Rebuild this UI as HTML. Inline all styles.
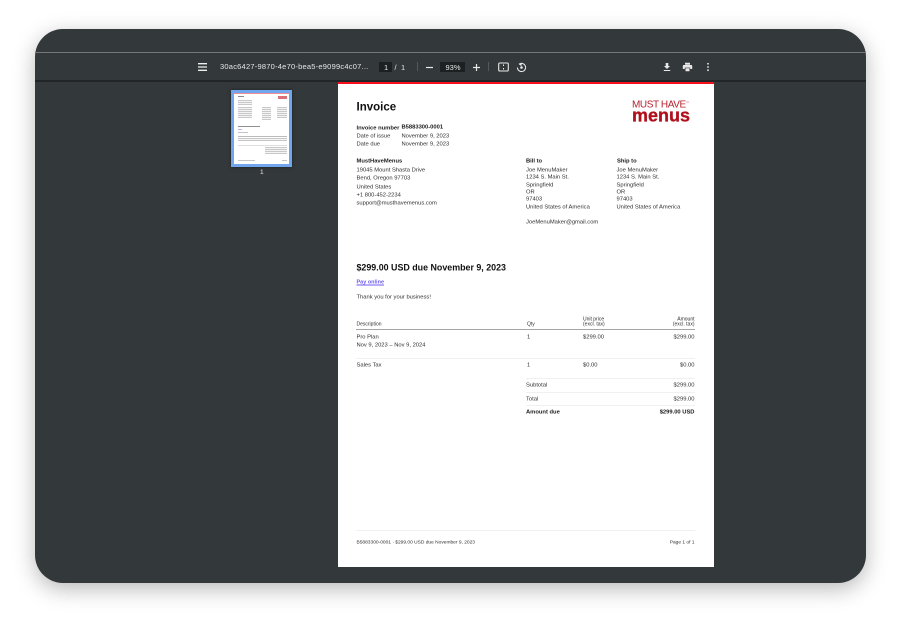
<!DOCTYPE html>
<html lang="en">
<head>
<meta charset="utf-8">
<title>Invoice</title>
<style>
html,body{margin:0;padding:0;background:#fff;width:900px;height:623px;overflow:hidden}
body{position:relative;font-family:"Liberation Sans",sans-serif}
#frame{position:absolute;left:35px;top:29px;width:831px;height:554px;border-radius:28px;background:#33383b;box-shadow:0 6px 22px rgba(0,0,0,.28);overflow:hidden}
#ln1{position:absolute;left:35px;top:51.5px;width:831px;height:1.5px;background:#74777a}
#ln2{position:absolute;left:35px;top:80px;width:831px;height:2px;background:#222527}
#page{position:absolute;left:338px;top:82px;width:376px;height:485px;background:#fff;border-top:2px solid #f5101c;box-sizing:border-box}
.t{position:absolute;white-space:nowrap;line-height:1;color:#303030;font-size:5.8px;filter:blur(.15px);transform:translateY(1.5px)}
.b{font-weight:bold;color:#1a1a1a}
.r{text-align:right}
.h{position:absolute;background:#f0f0f0;height:1px}
.w{color:#e6e6e6;transform:none}
svg{position:absolute;display:block}
#thumb{position:absolute;left:231px;top:90px;width:61px;height:77px;background:#fff;border:3px solid #71a6ef;box-sizing:border-box;overflow:hidden;box-shadow:0 0 3px rgba(0,0,0,.5)}
.m{position:absolute;background:#c4c4c4;height:1px}
.s{background:repeating-linear-gradient(#c8c8c8 0 1px,#f4f4f4 1px 2px)}
</style>
</head>
<body>
<div id="frame"></div>
<div id="ln1"></div>
<div id="ln2"></div>

<!-- toolbar -->
<svg style="left:197px;top:62px" width="11" height="10" viewBox="0 0 11 10"><path d="M1 1.700h9M1 5h9M1 8.300h9" stroke="#f0f0f0" stroke-width="1.300" fill="none"/></svg>
<div class="t w" style="left:220px;top:63px;font-size:7.500px;letter-spacing:.03em">30ac6427-9870-4e70-bea5-e9099c4c07...</div>
<div style="position:absolute;left:379px;top:62px;width:13px;height:10px;background:#1d2022"></div>
<div class="t w" style="left:384px;top:63.500px;font-size:7.500px">1</div>
<div class="t w" style="left:394.500px;top:63.500px;font-size:7.500px">/</div>
<div class="t w" style="left:401px;top:63.500px;font-size:7.500px">1</div>
<div style="position:absolute;left:417px;top:62px;width:1px;height:9px;background:#55595c"></div>
<svg style="left:425px;top:62.500px" width="9" height="9" viewBox="0 0 9 9"><path d="M1 4.500h7" stroke="#e8e8e8" stroke-width="1.200"/></svg>
<div style="position:absolute;left:440px;top:62px;width:25px;height:10px;background:#1d2022"></div>
<div class="t w" style="left:445.500px;top:63.500px;font-size:7.500px">93%</div>
<svg style="left:472px;top:62.500px" width="9" height="9" viewBox="0 0 9 9"><path d="M1 4.500h7M4.500 1v7" stroke="#e8e8e8" stroke-width="1.200"/></svg>
<div style="position:absolute;left:488px;top:62px;width:1px;height:9px;background:#55595c"></div>
<svg style="left:498px;top:62px" width="11" height="10" viewBox="0 0 11 10"><rect x=".7" y="1" width="9.600" height="8" rx="1" fill="none" stroke="#e8e8e8" stroke-width="1.100"/><path d="M5.500 2.500v1.500M5.500 6v1.500" stroke="#e8e8e8" stroke-width="1"/></svg>
<svg style="left:516px;top:61.500px" width="11" height="11" viewBox="0 0 11 11"><path d="M3 2.200A4.100 4.100 0 1 1 1.400 5.500" fill="none" stroke="#e8e8e8" stroke-width="1"/><path d="M5.500.4 3 2.400 5.500 4.200z" fill="#e8e8e8"/><circle cx="5.500" cy="5.500" r="1.300" fill="#e8e8e8"/></svg>
<svg style="left:662px;top:62px" width="10" height="10" viewBox="0 0 10 10"><path d="M3.700 1h2.600v3H8L5 7 2 4h1.700zM1.800 8h6.400v1H1.800z" fill="#e8e8e8"/></svg>
<svg style="left:682px;top:62px" width="11" height="10" viewBox="0 0 11 10"><path d="M3 .8h5v2H3zM1.800 3h7.400c.6 0 1 .4 1 1v3H8.200V5.600H2.800V7H.8V4c0-.6.400-1 1-1zM3.500 6.300h4v2.900h-4z" fill="#e8e8e8"/></svg>
<svg style="left:705px;top:62px" width="6" height="10" viewBox="0 0 6 10"><circle cx="3" cy="1.800" r=".9" fill="#e8e8e8"/><circle cx="3" cy="5" r=".9" fill="#e8e8e8"/><circle cx="3" cy="8.200" r=".9" fill="#e8e8e8"/></svg>

<!-- thumbnail -->
<div id="thumb">
  <div style="position:absolute;left:0;top:0;width:55px;height:1px;background:#ee8f96"></div>
  <div class="m" style="left:4px;top:3px;width:6px;background:#8a8a8a"></div>
  <div class="m" style="left:44px;top:3px;width:9px;height:3px;background:#dc7078"></div>
  <div class="m s" style="left:4px;top:7px;width:14px;height:5px"></div>
  <div class="m s" style="left:4px;top:14px;width:14px;height:11px"></div>
  <div class="m s" style="left:28px;top:14px;width:9px;height:13px"></div>
  <div class="m s" style="left:43px;top:14px;width:10px;height:11px"></div>
  <div class="m" style="left:4px;top:33px;width:22px;background:#8f8f8f"></div>
  <div class="m" style="left:4px;top:36px;width:4px;background:#b9b2f5"></div>
  <div class="m" style="left:4px;top:39px;width:10px"></div>
  <div class="m" style="left:4px;top:43px;width:49px;background:#bbb"></div>
  <div class="m s" style="left:4px;top:45px;width:49px;height:3px"></div>
  <div class="m" style="left:4px;top:52px;width:49px;background:#dedede"></div>
  <div class="m s" style="left:31px;top:54px;width:22px;height:7px"></div>
  <div class="m" style="left:4px;top:67px;width:17px"></div>
  <div class="m" style="left:48px;top:67px;width:5px"></div>
</div>
<div class="t w" style="left:260px;top:170px;font-size:6.500px">1</div>

<!-- page -->
<div id="page"></div>
<div class="t b" style="left:356.500px;top:101px;font-size:11.500px;font-weight:bold;color:#111">Invoice</div>

<div class="t" style="left:632px;top:99px;font-size:10px;color:#b8202c;letter-spacing:-.4px">MUST HAVE<span style="font-size:3px;vertical-align:4px">™</span></div>
<div class="t" style="left:632px;top:105px;font-size:18px;font-weight:bold;color:#b0101c;-webkit-text-stroke:.3px #b0101c">menus</div>

<div class="t b" style="left:356.500px;top:124.500px">Invoice number</div>
<div class="t b" style="left:401.500px;top:124px">B5883300-0001</div>
<div class="t" style="left:356.500px;top:133px">Date of issue</div>
<div class="t" style="left:401.500px;top:133px">November 9, 2023</div>
<div class="t" style="left:356.500px;top:141px">Date due</div>
<div class="t" style="left:401.500px;top:141px">November 9, 2023</div>

<div class="t b" style="left:356.500px;top:158px">MustHaveMenus</div>
<div class="t" style="left:356.500px;top:167px">19045 Mount Shasta Drive</div>
<div class="t" style="left:356.500px;top:175px">Bend, Oregon 97703</div>
<div class="t" style="left:356.500px;top:183.500px">United States</div>
<div class="t" style="left:356.500px;top:192px">+1 800-452-2234</div>
<div class="t" style="left:356.500px;top:200px">support@musthavemenus.com</div>

<div class="t b" style="left:526px;top:158px">Bill to</div>
<div class="t" style="left:526px;top:166.500px">Joe MenuMaker</div>
<div class="t" style="left:526px;top:174px">1234 S. Main St.</div>
<div class="t" style="left:526px;top:181.500px">Springfield</div>
<div class="t" style="left:526px;top:188.500px">OR</div>
<div class="t" style="left:526px;top:196px">97403</div>
<div class="t" style="left:526px;top:204px">United States of America</div>
<div class="t" style="left:526px;top:219px">JoeMenuMaker@gmail.com</div>

<div class="t b" style="left:617px;top:158px">Ship to</div>
<div class="t" style="left:616.500px;top:166.500px">Joe MenuMaker</div>
<div class="t" style="left:616.500px;top:174px">1234 S. Main St.</div>
<div class="t" style="left:616.500px;top:181.500px">Springfield</div>
<div class="t" style="left:616.500px;top:188.500px">OR</div>
<div class="t" style="left:616.500px;top:196px">97403</div>
<div class="t" style="left:616.500px;top:204px">United States of America</div>

<div class="t b" style="left:356.500px;top:262px;font-size:8.900px;color:#111">$299.00 USD due November 9, 2023</div>
<div class="t" style="left:356.500px;top:279px;font-size:5.500px;font-weight:bold;color:#6c5cf0;text-decoration:underline">Pay online</div>
<div class="t" style="left:356.500px;top:294px">Thank you for your business!</div>

<div class="t" style="left:356.500px;top:320.500px;font-size:5px">Description</div>
<div class="t" style="left:527px;top:320.500px;font-size:5px">Qty</div>
<div class="t" style="left:583px;top:315.500px;font-size:5px">Unit price</div>
<div class="t" style="left:583px;top:321px;font-size:5px">(excl. tax)</div>
<div class="t r" style="right:205.500px;top:315.500px;font-size:5px">Amount</div>
<div class="t r" style="right:205.500px;top:321px;font-size:5px">(excl. tax)</div>
<div class="h" style="left:356px;top:328.500px;width:339px;height:1.500px;background:#a5a5a5"></div>

<div class="t" style="left:356.500px;top:333.500px">Pro Plan</div>
<div class="t" style="left:356.500px;top:342px">Nov 9, 2023 – Nov 9, 2024</div>
<div class="t" style="left:527px;top:333.500px">1</div>
<div class="t" style="left:583px;top:333.500px">$299.00</div>
<div class="t r" style="right:205.500px;top:333.500px">$299.00</div>
<div class="h" style="left:356px;top:358px;width:339px"></div>

<div class="t" style="left:356.500px;top:362px">Sales Tax</div>
<div class="t" style="left:527px;top:362px">1</div>
<div class="t" style="left:583px;top:362px">$0.00</div>
<div class="t r" style="right:205.500px;top:362px">$0.00</div>
<div class="h" style="left:526px;top:378px;width:169px"></div>

<div class="t" style="left:526px;top:382px">Subtotal</div>
<div class="t r" style="right:205.500px;top:382px">$299.00</div>
<div class="h" style="left:526px;top:391.500px;width:169px"></div>
<div class="t" style="left:526px;top:395.500px">Total</div>
<div class="t r" style="right:205.500px;top:395.500px">$299.00</div>
<div class="h" style="left:526px;top:404.500px;width:169px"></div>
<div class="t b" style="left:526px;top:409px">Amount due</div>
<div class="t b r" style="right:205.500px;top:409px">$299.00 USD</div>

<div class="h" style="left:356px;top:530px;width:339px"></div>
<div class="t" style="left:356.500px;top:539.500px;font-size:4.850px">B5883300-0001 · $299.00 USD due November 9, 2023</div>
<div class="t r" style="right:205.500px;top:539.500px;font-size:4.850px">Page 1 of 1</div>
</body>
</html>
